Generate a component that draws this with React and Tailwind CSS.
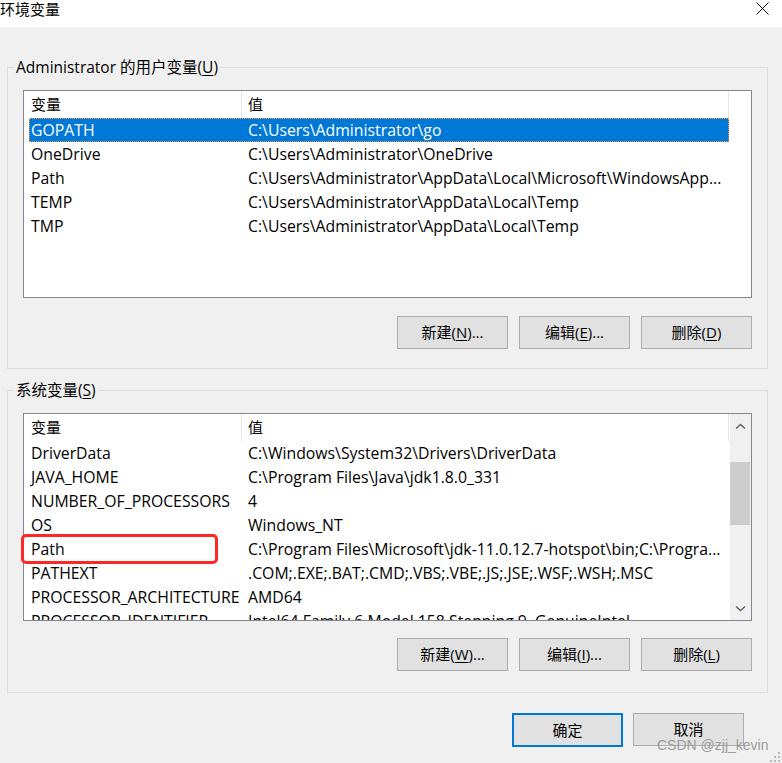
// Windows "环境变量" dialog
import React from 'react';

const userVars = [
    { name: 'GOPATH', value: 'C:\\Users\\Administrator\\go', selected: true },
    { name: 'OneDrive', value: 'C:\\Users\\Administrator\\OneDrive' },
    { name: 'Path', value: 'C:\\Users\\Administrator\\AppData\\Local\\Microsoft\\WindowsApp...' },
    { name: 'TEMP', value: 'C:\\Users\\Administrator\\AppData\\Local\\Temp' },
    { name: 'TMP', value: 'C:\\Users\\Administrator\\AppData\\Local\\Temp' },
];

const systemVars = [
    { name: 'DriverData', value: 'C:\\Windows\\System32\\Drivers\\DriverData' },
    { name: 'JAVA_HOME', value: 'C:\\Program Files\\Java\\jdk1.8.0_331' },
    { name: 'NUMBER_OF_PROCESSORS', value: '4' },
    { name: 'OS', value: 'Windows_NT' },
    { name: 'Path', value: 'C:\\Program Files\\Microsoft\\jdk-11.0.12.7-hotspot\\bin;C:\\Progra...' },
    { name: 'PATHEXT', value: '.COM;.EXE;.BAT;.CMD;.VBS;.VBE;.JS;.JSE;.WSF;.WSH;.MSC' },
    { name: 'PROCESSOR_ARCHITECTURE', value: 'AMD64' },
    { name: 'PROCESSOR_IDENTIFIER', value: 'Intel64 Family 6 Model 158 Stepping 9, GenuineIntel' },
];

const Mn = ({ children }) => <span className="underline underline-offset-2">{children}</span>;

const WinButton = ({ children, primary }) => (
    <button
        className={
            primary
                ? 'w-[111px] h-[34px] bg-[#e1e1e1] border-2 border-[#0078d7] text-[15px] leading-none text-black'
                : 'w-[111px] h-[33px] bg-[#e1e1e1] border border-[#adadad] text-[15px] leading-none text-black'
        }
    >
        {children}
    </button>
);

const ListHeader = () => (
    <div className="flex h-[27px] shrink-0 items-center">
        <div className="w-[218px] h-full pl-[7px] flex items-center border-r border-[#e5e5e5]">变量</div>
        <div className="w-[487px] h-full pl-[6px] flex items-center border-r border-[#e5e5e5]">值</div>
    </div>
);

const Row = ({ name, value, selected }) => (
    <div
        className={
            selected
                ? 'ml-[5px] w-[700px] h-[24px] pt-[2px] shrink-0 flex items-center text-[15.8px] bg-[#0078d7] text-white border border-dotted border-[#ff9a3c]'
                : 'ml-[5px] w-[700px] h-[24px] pt-[2px] shrink-0 flex items-center text-[15.8px] border border-transparent'
        }
    >
        <div className="w-[218px] pl-[1px] whitespace-nowrap overflow-hidden">{name}</div>
        <div className="flex-1 whitespace-nowrap overflow-hidden">{value}</div>
    </div>
);

const Chevron = ({ down }) => (
    <svg width="11" height="7" viewBox="0 0 11 7">
        <path
            d={down ? 'M1 1.5 L5.5 5.5 L10 1.5' : 'M1 5.5 L5.5 1.5 L10 5.5'}
            fill="none"
            stroke="#606060"
            strokeWidth="1.4"
        />
    </svg>
);

const Scrollbar = () => (
    <div className="w-[21px] h-full bg-[#f0f0f0] flex flex-col">
        <div className="h-[24px] flex items-center justify-center pt-[1px]">
            <Chevron />
        </div>
        <div className="flex-1">
            <div className="mt-[24px] w-[20px] h-[63px] bg-[#cdcdcd]" />
        </div>
        <div className="h-[24px] flex items-center justify-center">
            <Chevron down />
        </div>
    </div>
);

const GroupBox = ({ legend, className, children }) => (
    <fieldset className={`ml-[7px] w-[761px] border border-[#dcdcdc] ${className}`}>
        <legend className="ml-[6px] px-[2px] leading-[20px] text-[15.5px]">{legend}</legend>
        {children}
    </fieldset>
);

export default function App() {
    return (
        <div className="relative w-[782px] h-[763px] overflow-hidden bg-[#f0f0f0] text-[15px] text-black font-['Open_Sans','Noto_Sans_CJK_SC',sans-serif]">
            {/* Title bar */}
            <div className="h-[27px] bg-white flex justify-between">
                <div className="leading-[19px]">环境变量</div>
                <svg className="mt-[2px] mr-[13px]" width="13" height="13" viewBox="0 0 13 13">
                    <path d="M0.5 0.5 L12.5 12.5 M12.5 0.5 L0.5 12.5" stroke="#000" strokeWidth="1" />
                </svg>
            </div>

            {/* User variables */}
            <GroupBox
                className="mt-[30px] pb-[19px]"
                legend={<>Administrator 的用户变量(<Mn>U</Mn>)</>}
            >
                <div className="mt-[13px] ml-[15px] w-[729px] h-[208px] border border-[#828790] bg-white flex flex-col overflow-hidden">
                    <ListHeader />
                    {userVars.map((v) => (
                        <Row key={v.name} {...v} />
                    ))}
                </div>
                <div className="mt-[18px] ml-[389px] flex gap-[11px]">
                    <WinButton>新建(<Mn>N</Mn>)...</WinButton>
                    <WinButton>编辑(<Mn>E</Mn>)...</WinButton>
                    <WinButton>删除(<Mn>D</Mn>)</WinButton>
                </div>
            </GroupBox>

            {/* System variables */}
            <GroupBox className="mt-[11px] pb-[21px]" legend={<>系统变量(<Mn>S</Mn>)</>}>
                <div className="mt-[13px] ml-[15px] w-[729px] h-[208px] border border-[#828790] bg-white flex overflow-hidden">
                    <div className="w-[706px] flex flex-col overflow-hidden">
                        <ListHeader />
                        {systemVars.map((v) => (
                            <Row key={v.name} {...v} />
                        ))}
                    </div>
                    <Scrollbar />
                </div>
                <div className="mt-[17px] ml-[389px] flex gap-[11px]">
                    <WinButton>新建(<Mn>W</Mn>)...</WinButton>
                    <WinButton>编辑(<Mn>I</Mn>)...</WinButton>
                    <WinButton>删除(<Mn>L</Mn>)</WinButton>
                </div>
            </GroupBox>

            {/* OK / Cancel */}
            <div className="mt-[20px] mr-[38px] flex justify-end gap-[10px]">
                <WinButton primary>确定</WinButton>
                <WinButton>取消</WinButton>
            </div>

            {/* Annotation around Path */}
            <div className="absolute left-[21px] top-[534px] w-[197px] h-[30px] border-[3px] border-[#ff2626] rounded-[5px]" />

            {/* Watermark */}
            <div className="absolute left-[657px] top-[737px] text-[14px] leading-[17px] text-[#9c9c9c] font-['Liberation_Sans',sans-serif]">
                CSDN @zjj_kevin
            </div>

            {/* Resize grip */}
            <svg className="absolute right-0 bottom-0" width="13" height="12" viewBox="0 0 13 12">
                <rect x="9" y="1" width="2" height="2" fill="#b8b8b8" />
                <rect x="5" y="5" width="2" height="2" fill="#b8b8b8" />
                <rect x="9" y="5" width="2" height="2" fill="#b8b8b8" />
                <rect x="1" y="9" width="2" height="2" fill="#b8b8b8" />
                <rect x="5" y="9" width="2" height="2" fill="#b8b8b8" />
                <rect x="9" y="9" width="2" height="2" fill="#b8b8b8" />
            </svg>
        </div>
    );
}
